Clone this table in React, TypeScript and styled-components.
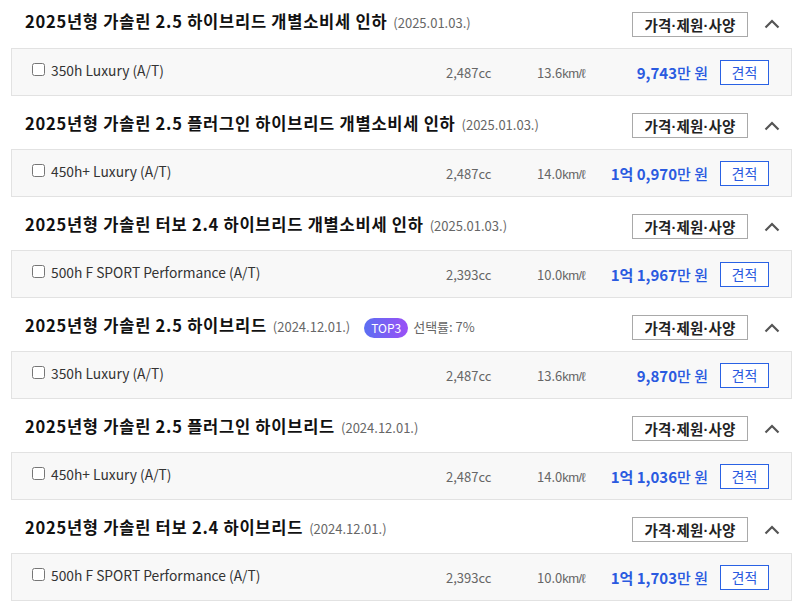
import React from "react";
import styled, { createGlobalStyle } from "styled-components";

const GlobalStyle = createGlobalStyle`
  html, body { margin: 0; padding: 0; background: #fff; }
  body { font-family: "Noto Sans CJK KR", "Noto Sans", sans-serif; color: #222; }
  * { box-sizing: border-box; }
`;

const List = styled.div`
  width: 781px;
  margin-left: 11px;
`;

const Section = styled.section`
  display: flex;
  flex-direction: column;
  &:first-child > header { padding-top: 11px; height: 48px; }
`;

const Header = styled.header`
  height: 53px;
  display: flex;
  align-items: center;
  padding: 17px 12px 11px 14px;
`;

const TitleWrap = styled.div`
  flex: 1;
  display: flex;
  align-items: baseline;
  margin-top: -6px;
  min-width: 0;
`;

const Title = styled.h3`
  margin: 0;
  font-size: 16.5px;
  font-weight: 700;
  color: #111;
  letter-spacing: 0.75px;
  white-space: nowrap;
`;

const DateText = styled.span`
  margin-left: 6px;
  font-size: 13px;
  color: #666;
  white-space: nowrap;
`;

const Badge = styled.span`
  margin-left: 14px;
  align-self: center;
  display: inline-flex;
  align-items: center;
  justify-content: center;
  height: 20px;
  padding: 0 7px;
  border-radius: 10px;
  background: linear-gradient(90deg, #5b6ff2 0%, #9b4ff6 100%);
  color: #fff;
  font-size: 12px;
  transform: translateY(3px);
`;

const Rate = styled.span`
  margin-left: 5px;
  font-size: 13px;
  color: #666;
`;

const SpecButton = styled.button`
  width: 116px;
  height: 25px;
  padding: 0;
  border: 1px solid #a9a9a9;
  background: #fff;
  font-family: inherit;
  font-size: 14.5px;
  font-weight: 700;
  color: #222;
  letter-spacing: 0.2px;
  cursor: pointer;
`;

const Dot = styled.span`
  font-family: "Liberation Sans", sans-serif;
  font-weight: 700;
  letter-spacing: 0;
`;

const Chevron = styled.span`
  width: 16px;
  margin-left: 16px;
  display: flex;
  justify-content: center;
`;

const Row = styled.div`
  height: 48px;
  display: flex;
  align-items: center;
  background: #f8f8f8;
  border: 1px solid #e2e2e2;
  padding: 0 22px 0 20px;
`;

const Label = styled.label`
  flex: 1;
  display: flex;
  align-items: center;
  font-size: 13.8px;
  color: #333;
  padding-bottom: 5px;
`;

const Check = styled.input`
  margin: 0 6px 0 0;
  width: 13px;
  height: 13px;
`;

const Cell = styled.span<{ $w: number }>`
  width: ${(p) => p.$w}px;
  font-size: 13px;
  color: #666;
  white-space: nowrap;
`;

const Unit = styled.span`
  font-family: "Liberation Sans", sans-serif;
  font-size: 13px;
  letter-spacing: -0.6px;
`;

const Price = styled.span`
  width: 120px;
  text-align: right;
  font-size: 15px;
  color: #2a5ae0;
  font-weight: 500;
  white-space: nowrap;
  b { font-weight: 700; }
`;

const QuoteButton = styled.button`
  margin-left: 12px;
  width: 49px;
  height: 25px;
  padding: 0;
  border: 1px solid #2a62e4;
  background: #fff;
  color: #2a5ae0;
  font-family: inherit;
  font-size: 14px;
  cursor: pointer;
`;

type Item = {
  title: string;
  date: string;
  top?: boolean;
  name: string;
  cc: string;
  km: string;
  eok?: string;
  man: string;
};

const items: Item[] = [
  { title: "2025년형 가솔린 2.5 하이브리드 개별소비세 인하", date: "(2025.01.03.)", name: "350h Luxury (A/T)", cc: "2,487cc", km: "13.6", man: "9,743" },
  { title: "2025년형 가솔린 2.5 플러그인 하이브리드 개별소비세 인하", date: "(2025.01.03.)", name: "450h+ Luxury (A/T)", cc: "2,487cc", km: "14.0", eok: "1", man: "0,970" },
  { title: "2025년형 가솔린 터보 2.4 하이브리드 개별소비세 인하", date: "(2025.01.03.)", name: "500h F SPORT Performance (A/T)", cc: "2,393cc", km: "10.0", eok: "1", man: "1,967" },
  { title: "2025년형 가솔린 2.5 하이브리드", date: "(2024.12.01.)", top: true, name: "350h Luxury (A/T)", cc: "2,487cc", km: "13.6", man: "9,870" },
  { title: "2025년형 가솔린 2.5 플러그인 하이브리드", date: "(2024.12.01.)", name: "450h+ Luxury (A/T)", cc: "2,487cc", km: "14.0", eok: "1", man: "1,036" },
  { title: "2025년형 가솔린 터보 2.4 하이브리드", date: "(2024.12.01.)", name: "500h F SPORT Performance (A/T)", cc: "2,393cc", km: "10.0", eok: "1", man: "1,703" },
];

const UpIcon = () => (
  <svg width="16" height="10" viewBox="0 0 16 10">
    <polyline points="1.5,8.5 8,2 14.5,8.5" fill="none" stroke="#555" strokeWidth="2.2" />
  </svg>
);

export default function App() {
  return (
    <>
      <GlobalStyle />
      <List>
        {items.map((it, i) => (
          <Section key={i}>
            <Header>
              <TitleWrap>
                <Title>{it.title}</Title>
                <DateText>{it.date}</DateText>
                {it.top && (
                  <>
                    <Badge>TOP3</Badge>
                    <Rate>선택률: 7%</Rate>
                  </>
                )}
              </TitleWrap>
              <SpecButton>
                가격<Dot>·</Dot>제원<Dot>·</Dot>사양
              </SpecButton>
              <Chevron>
                <UpIcon />
              </Chevron>
            </Header>
            <Row>
              <Label>
                <Check type="checkbox" />
                {it.name}
              </Label>
              <Cell $w={91}>{it.cc}</Cell>
              <Cell $w={51}>
                {it.km}
                <Unit>km/ℓ</Unit>
              </Cell>
              <Price>
                {it.eok && <b>{it.eok}억 </b>}
                <b>{it.man}</b>만 원
              </Price>
              <QuoteButton>견적</QuoteButton>
            </Row>
          </Section>
        ))}
      </List>
    </>
  );
}
